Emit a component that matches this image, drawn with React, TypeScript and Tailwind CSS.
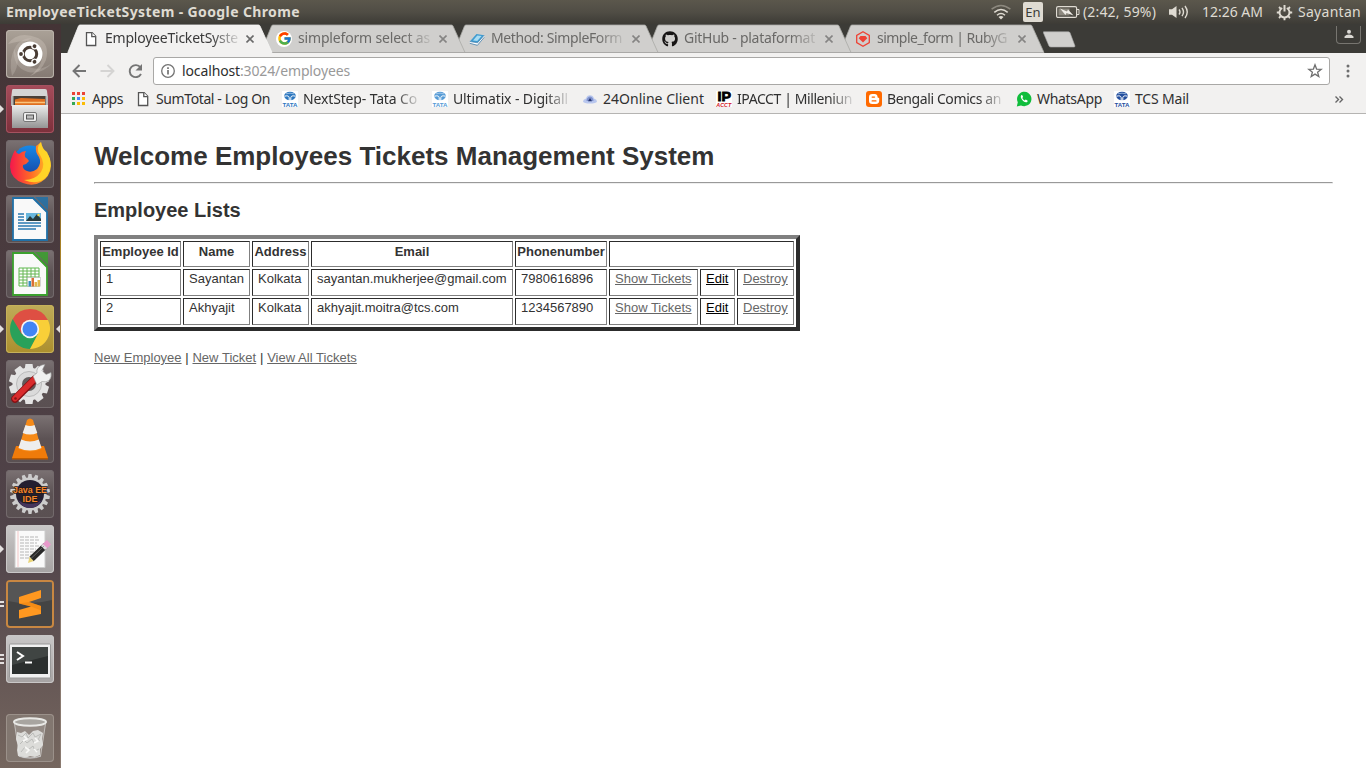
import { useLayoutEffect, useRef, type ReactNode } from "react";
import { FaGithub } from "react-icons/fa";
import { FcGoogle } from "react-icons/fc";

/* Spreads a single line of text over a given width. */
function Fit({ w, children, className = "" }: { w: number; children: string; className?: string }) {
  const ref = useRef<HTMLSpanElement>(null);
  useLayoutEffect(() => {
    const el = ref.current;
    if (!el) return;
    el.style.letterSpacing = "0px";
    const natural = el.getBoundingClientRect().width;
    el.style.letterSpacing = `${(w - natural) / children.length}px`;
  }, [w, children]);
  return (
    <span ref={ref} className={`inline-block shrink-0 whitespace-pre ${className}`}>
      {children}
    </span>
  );
}

const fade = "[mask-image:linear-gradient(to_right,black_80%,rgb(0_0_0/0.15)_100%)]";

/* ---------- small icons ---------- */

function PageIcon() {
  return (
    <svg width="16" height="16" viewBox="0 0 16 16" fill="#fff" stroke="#555" strokeWidth="1.3">
      <path d="M3.5 1.6h5.6l3.6 3.7v9.2H3.5z" />
      <path d="M8.8 1.6v4h3.9" />
    </svg>
  );
}

function BookIcon() {
  return (
    <svg width="16" height="16" viewBox="0 0 16 16">
      <path d="M.8 10.500 7.500 3l7.700 1.200-6.600 7.600z" fill="#3f9bd0" />
      <path d="m4 9.500 4.300-5 4.300.6L8.300 10z" fill="#a9dcf2" />
      <path d="M.8 10.500v1.600l7.600 2 6.800-8V4.200l-6.600 7.600z" fill="#fff" />
      <path d="M.8 10.500 8.600 11.800l6.600-7.600M.8 12.300l7.600 2 6.800-8" fill="none" stroke="#3779a9" strokeWidth=".7" />
    </svg>
  );
}

function GemIcon() {
  return (
    <svg width="16" height="16" viewBox="0 0 16 16">
      <path d="m8 .8 6.300 3.600v7.200L8 15.200l-6.300-3.600V4.400z" fill="none" stroke="#ee4235" strokeWidth="1.300" />
      <path d="M5.500 4.900h5L12.300 7.200 8 11.600 3.700 7.200z" fill="#ee4235" />
    </svg>
  );
}

function AppsIcon() {
  const colors = ["#ea4335", "#ea4335", "#ea4335", "#34a853", "#4285f4", "#fbbc05", "#34a853", "#fbbc05", "#fbbc05"];
  return (
    <svg width="16" height="16" viewBox="0 0 16 16">
      {colors.map((c, i) => (
        <rect key={i} x={1 + (i % 3) * 5} y={1 + Math.floor(i / 3) * 5} width="3" height="3" fill={c} />
      ))}
    </svg>
  );
}

function TataIcon({ color = "#2c77bf" }: { color?: string }) {
  return (
    <svg width="16" height="16" viewBox="0 0 16 16">
      <rect width="16" height="16" fill="#fff" />
      <ellipse cx="8" cy="5" rx="5.800" ry="4.200" fill={color} />
      <path d="M2.500 5.200q4.400-1.200 4.700 1.500V10M13.500 5.200q-4.400-1.200-4.700 1.500V10" fill="none" stroke="#fff" strokeWidth="1" />
      <path d="M4 2.800q4-1.300 8 0" fill="none" stroke="#bcd6ef" strokeWidth=".7" />
      <text x=".5" y="15.500" fontSize="6.200" fontWeight="700" fontFamily="Liberation Sans, sans-serif" textLength="15" lengthAdjust="spacingAndGlyphs" fill={color}>
        TATA
      </text>
    </svg>
  );
}

function DomeIcon() {
  return (
    <svg width="16" height="16" viewBox="0 0 16 16">
      <path d="M1 10.500q0-2 3-3 1-3.200 4-3.200t4 3.200q3 1 3 3-1 2-7 2t-7-2" fill="#b9c7ee" />
      <path d="M4.500 10q0-4 3.500-4.500 3.500.5 3.500 4.500z" fill="#8093cf" />
      <path d="m8 7 2 3.200H6z" fill="#25366f" />
    </svg>
  );
}

function IpIcon() {
  return (
    <svg width="16" height="16" viewBox="0 0 16 16" fontFamily="Liberation Sans, sans-serif" fontWeight="700">
      <rect width="16" height="16" fill="#fff" />
      <text x="1.500" y="10" fontSize="13" textLength="13.500" lengthAdjust="spacingAndGlyphs" stroke="#000" strokeWidth=".8">IP</text>
      <text x=".3" y="15.800" fontSize="6" fontStyle="italic" fill="#d3121b" textLength="15" lengthAdjust="spacingAndGlyphs">ACCT</text>
    </svg>
  );
}

function BloggerIcon() {
  return (
    <svg width="16" height="16" viewBox="0 0 16 16">
      <rect width="16" height="16" rx="3" fill="#ff6a00" />
      <path d="M6.300 3h2.400a2.800 2.800 0 0 1 2.800 2.600c0 .9.300 1.200 1 1.200.500 0 .700.300.700.800v2A3.300 3.300 0 0 1 9.900 13H6.300A3.300 3.300 0 0 1 3 9.700V6.300A3.300 3.300 0 0 1 6.300 3" fill="#fff" />
      <path d="M6.200 6.100h2.300M6.200 9.900h3.700" stroke="#ff6a00" strokeWidth="1.400" strokeLinecap="round" />
    </svg>
  );
}

function WhatsAppIcon() {
  return (
    <svg width="16" height="16" viewBox="0 0 16 16">
      <path d="m.8 15.500 1-4.300A7.200 7.200 0 1 1 5 14.400z" fill="#10bd3c" />
      <path d="M5.200 4.300Q6.500 3.500 7.100 6l-.8 1.100q.8 1.700 2.400 2.300l1-1q2.600 1 1.900 2-1.300 2-4.500-.4Q3.700 6.600 5.200 4.300" fill="#fff" />
    </svg>
  );
}

/* ---------- system bar ---------- */

function SystemBar() {
  return (
    <header className="flex h-6 shrink-0 items-center bg-linear-to-b from-[#5b574c] via-[#504d45] to-[#3d3b36] pl-1.5 text-[14px] leading-6 text-[#dfdbd2]">
      <Fit w={294} className="font-bold">EmployeeTicketSystem - Google Chrome</Fit>
      <div className="ml-auto flex items-center">
        <svg width="20" height="16" viewBox="0 0 20 16" fill="none" stroke="#dfdbd2" strokeWidth="1.500">
          <path d="M.6 5.200q9.400-7.400 18.800 0" stroke="#8c887e" />
          <path d="M3.300 8.300q6.700-5.600 13.400 0M6 11.200q4-3.400 8 0" />
          <path d="m7.500 13 2.500 2.500 2.500-2.500q-2.500-2-5 0" fill="#dfdbd2" stroke="none" />
        </svg>
        <span className="ml-3 h-5 w-5 rounded-xs bg-[#dfdbd2] text-center text-[13px] leading-[21px] text-[#3c3b37]">En</span>
        <svg className="ml-3" width="26" height="16" viewBox="0 0 26 16">
          <rect x="1.600" y="2.600" width="20" height="10.800" rx="1.500" fill="none" stroke="#dfdbd2" strokeWidth="1.200" />
          <rect x="3.500" y="4.500" width="11" height="7" fill="#8d897f" />
          <path d="M22 5.500h2v5h-2" fill="none" stroke="#dfdbd2" />
          <path d="m5 4.500 7 3 1-2 5.500 6-7-2.500-1 2z" fill="#efece6" />
        </svg>
        <Fit w={73} className="ml-0.5">(2:42, 59%)</Fit>
        <svg className="ml-[13px]" width="21" height="16" viewBox="0 0 21 16" fill="none" stroke="#dfdbd2" strokeWidth="1.400">
          <path d="M0 5.300h3L7.500 2v12L3 10.700H0z" fill="#dfdbd2" stroke="none" />
          <path d="M10 5.500q2 2.500 0 5M13 3.800q3 4.200 0 8.400M16 2q4.500 6 0 12" />
        </svg>
        <Fit w={61} className="ml-3">12:26 AM</Fit>
        <svg className="ml-[13px]" width="17" height="17" viewBox="0 0 17 17" fill="none" stroke="#dfdbd2">
          <path d="M10.800 4a5 5 0 1 1-4.600 0" strokeWidth="1.900" />
          <path d="M8.500 1v6.500" strokeWidth="2" />
          <path d="M.8 8.500h2.500M13.700 8.500h2.500M8.500 13.700v2.500M3 3l1.800 1.800M14 3l-1.800 1.800M3 14l1.800-1.800M14 14l-1.800-1.800" strokeWidth="1.900" />
        </svg>
        <Fit w={63} className="mr-[5px] ml-[5px]">Sayantan</Fit>
      </div>
    </header>
  );
}

/* ---------- launcher ---------- */

function Gear({ teeth, fill, r = 17, w = 4 }: { teeth: number; fill: string; r?: number; w?: number }) {
  return (
    <g fill={fill}>
      {Array.from({ length: teeth }, (_, i) => (
        <path key={i} d={`M${24 - w} ${24 - r - 3.500}h${w * 2}l1 6h-${w * 2 + 2}z`} transform={`rotate(${(i * 360) / teeth} 24 24)`} />
      ))}
      <circle cx="24" cy="24" r={r} />
    </g>
  );
}

function Dash() {
  return (
    <g>
      <path d="M2 14Q12 0 32 8 44 14 40 30 35 42 24 46 39 34 36 20 31 6 2 14" fill="#ddd3cb" opacity=".3" />
      <path d="M6 46Q2 29 10 16q6-8 16-8Q12 15 12 27t-6 19" fill="#ddd3cb" opacity=".25" />
      <path d="M8 18Q6 37 22 42q14 3 24-9-10 8-20 5Q12 34 8 18" fill="#ddd3cb" opacity=".25" />
      <circle cx="24" cy="24" r="12.500" fill="#fff" />
      <circle cx="24" cy="24" r="6.700" fill="none" stroke="#493c34" strokeWidth="3" />
      {[60, 180, 300].map((a) => (
        <g key={a} transform={`rotate(${a} 24 24)`}>
          <circle cx="32.800" cy="24" r="3" fill="#fff" />
          <circle cx="33" cy="24" r="1.900" fill="#493c34" />
        </g>
      ))}
    </g>
  );
}

function Files() {
  return (
    <g>
      <path d="M7 4h32q2 0 2 2l1 8H5l1-8q0-2 1-2" fill="#d5d5d5" />
      <path d="M5 11h37v10H5z" fill="#b5b5b5" />
      <path d="M7.500 11h32v10h-32z" fill="#4a4039" />
      <path d="M9 14.500 15 13l24 1v6H9z" fill="#e06f20" />
      <path d="M9 17.500h30" stroke="#fac47d" strokeWidth="1.500" />
      <path d="M6 20h36v23H6z" fill="url(#silver)" />
      <rect x="17.500" y="27.500" width="13" height="9" rx="1.500" fill="#eee" stroke="#777" />
      <rect x="20.500" y="30" width="7" height="4" fill="#bbb" stroke="#555" />
    </g>
  );
}

function Firefox() {
  return (
    <g>
      <circle cx="24" cy="23" r="17.500" fill="url(#fxblue)" />
      <path d="M30 6q4-3 5-4 1 7 5 10 5 6 5 14-1 11-10 16-8 5-18 1Q5 39 4 27q0-8 5-17 1 3 4 4 3-3 7-3-2 3-1 6 3 2 4 4-2 3-6 4-1 4 4 6 5 2 10-2 5-6 2-12-4-5-3-11" fill="url(#fxorange)" />
      <path d="M35 2q-6 6-1 13 6 9 1 17-6 8-17 8 15 6 23-4 7-12 0-24Q36 9 35 2" fill="#ffd928" opacity=".9" />
    </g>
  );
}

function Sheet({ color, children }: { color: string; children: ReactNode }) {
  return (
    <g>
      <path d="M7 3h20l14 14v28H7z" fill="#f9f9f9" stroke={color} strokeWidth="1.800" />
      <path d="M29 2h13v13z" fill={color} opacity=".85" />
      <path d="m27 2.500 14.500 14.500" stroke={color} strokeWidth="1.500" />
      {children}
    </g>
  );
}

function Writer() {
  return (
    <Sheet color="#2171a8">
      <path d="M12 19h6M12 22h6M12 25h6M12 28h23M12 31h23M12 34h18" stroke="#2a7ab1" strokeWidth="1.500" />
      <rect x="20" y="18" width="15" height="8" fill="#68b6dc" />
      <path d="m20 26 4-5 3 3 4-5 4 5v2z" fill="#273b3d" />
      <circle cx="32.500" cy="20" r="1.200" fill="#ffdd4c" />
    </Sheet>
  );
}

function Calc() {
  return (
    <Sheet color="#3ba02e">
      <path d="M13 18h20v18H13z" fill="#fff" stroke="#5db94c" />
      <path d="M13 21h20M13 24h20M13 27h20M13 30h20M13 33h20M17 18v18M21 18v18M25 18v18M29 18v18" stroke="#65b653" />
      <rect x="21.500" y="27.500" width="13" height="9" fill="#fff" stroke="#aaa" strokeWidth=".5" />
      <path d="M22.500 31h2.500v5.500h-2.500z" fill="#398fbd" />
      <path d="M25.500 28h2.500v8.500h-2.500z" fill="#d96e36" />
      <path d="M28.500 32H31v4.500h-2.500zM31.500 30H34v6.500h-2.500z" fill="#e2b64b" />
    </Sheet>
  );
}

function Chrome() {
  return (
    <g>
      <path d="M24 24 6.700 14A20 20 0 0 0 24 44l8-15z" fill="#29a15a" />
      <path d="M24 24v-9h17.900A20 20 0 0 1 24 44l8-15z" fill="#f9cf38" />
      <path d="M24 15h17.900A20 20 0 0 0 6.700 14l9 15z" fill="#de4f43" />
      <circle cx="24" cy="24" r="9.200" fill="#f5f5f5" />
      <circle cx="24" cy="24" r="7.500" fill="#4285f4" />
    </g>
  );
}

function Tools() {
  return (
    <g>
      <g transform="translate(-1 0)">
        <Gear teeth={10} fill="#e4e4e4" r={16.500} w={3.500} />
        <circle cx="24" cy="24" r="12.500" fill="#dadada" stroke="#bbb" />
        <circle cx="24" cy="24" r="7" fill="#625b5b" />
      </g>
      <path d="m9 39 20-20" stroke="#851014" strokeWidth="7.500" strokeLinecap="round" />
      <path d="m9 38.500 20-20" stroke="#d92b2c" strokeWidth="5.500" strokeLinecap="round" />
      <path d="m27 16 4-3q-1-6 5-8l3-.500-3 6 4 4 5-2q1 5-2 8-3 2-7 1l-5 3.500z" fill="#f0f0f0" stroke="#999" strokeWidth=".6" />
      <circle cx="9.500" cy="38.500" r="1.300" fill="#831416" />
    </g>
  );
}

function Cone() {
  return (
    <g>
      <path d="m6 43 4-12h28l4 12z" fill="#ef7b0a" />
      <path d="M6 43h36v1.500H6z" fill="#b95900" />
      <path d="M21 5q3-3 6 0l8.500 29q-11 5-23 0z" fill="#f68a17" />
      <path d="m19.500 10-2.800 8q7.300 3 14.600 0l-2.800-8q-4.500 2-9 0M15.200 24.500 12.500 33q11.500 5 23 0l-2.700-8.500q-8.800 4-17.600 0" fill="#eee" />
    </g>
  );
}

function JavaEE() {
  return (
    <g>
      <Gear teeth={18} fill="#ccc" r={16.500} w={1.500} />
      <circle cx="24" cy="24" r="14" fill="#241f30" />
      <path d="M12 30q12 8 24 0-4 8-12 8t-12-8" fill="#44345b" />
      <g fontFamily="Liberation Sans, sans-serif" fontSize="9" fontWeight="700" fill="#f4852a" stroke="#231a18" strokeWidth="1.400" paintOrder="stroke">
        <text x="7" y="22.500" textLength="34" lengthAdjust="spacingAndGlyphs">Java EE</text>
        <text x="16.500" y="31.500" textLength="15" lengthAdjust="spacingAndGlyphs">IDE</text>
      </g>
    </g>
  );
}

function Gedit() {
  return (
    <g>
      <path d="M9 5.500h30v37H9z" fill="#fafafa" stroke="#ccc" />
      <path d="M12 6v36" stroke="#efafaf" strokeWidth=".7" />
      <path d="M14 12h18M14 15h20M14 18h17M14 21h20M14 24h16M14 27h14M14 30h12M14 33h9" stroke="#b5b5b5" strokeWidth="1.200" strokeDasharray="4 1" />
      <path d="m25.500 34 14-13.500" stroke="#292929" strokeWidth="6" />
      <path d="m38 22 5-4.700" stroke="#e79acb" strokeWidth="6" />
      <path d="m37 23 2-2" stroke="#ddd" strokeWidth="6" />
      <path d="m23.500 31.800 4.200 4.300-5.700 1.900z" fill="#e9d477" />
      <path d="m25 33.500 12.500-12" stroke="#666" strokeWidth="1" />
    </g>
  );
}

function Sublime() {
  return (
    <g>
      <path d="M2 2h44v18Q24 26 2 21z" fill="#656565" opacity=".55" />
      <path d="m13 17 22-7v8l-12 4 12 4v8l-22 4.500V30l12-3.500-12-3z" fill="#ff9820" />
      <path d="m13 23.500 12 3 10 4V26l-12-4z" fill="#e77e0b" opacity=".45" />
    </g>
  );
}

function Terminal() {
  return (
    <g>
      <rect x="3.500" y="9" width="41" height="34" rx="1" fill="#f1f1f1" stroke="#999" />
      <rect x="6" y="12" width="36" height="27" fill="#2b2f2e" />
      <path d="M6 12h36v9L6 30z" fill="#4a4e4d" opacity=".7" />
      <path d="m11 17 6 4-6 4M19 27.500h7" fill="none" stroke="#fff" strokeWidth="2" />
    </g>
  );
}

function Trash() {
  return (
    <g>
      <path d="m8 8 5 35q11 4 22 0l5-35z" fill="#ddd" opacity=".2" />
      <path d="m11 18 4 1 4-2 4 4 4-4 5-1 5 3-1 6 1 6-3 4v6l-5 2-5-1-5 2-7-2-1-6 1-5-2-6z" fill="#dcdcd9" />
      <path d="m12 21 4 2 4-4 2 5 5-5 2 4 6-3-3 6M14 30l4-4 3 3 5-4 2 4 6-3M15 38l4-5 3 3 5-4 2 5 4-2" fill="none" stroke="#b3b4b1" strokeWidth=".8" />
      <path d="m18 22 3 3-4 2M29 24l3 3-4 2M19 33l4 3-3 3M28 35l3 3" fill="none" stroke="#f8f8f6" strokeWidth="1.600" />
      <ellipse cx="24" cy="8" rx="16" ry="3.800" fill="#a8a5a0" stroke="#e9e9e6" strokeWidth="2" />
      <path d="m8.500 10 5 32M39.500 10l-5 32" stroke="#e6e6e3" strokeWidth=".8" opacity=".7" />
      <path d="M13 42q11 4 22 0" fill="none" stroke="#ccc" />
    </g>
  );
}

const glass = "bg-linear-to-b from-[#7b7273] via-[#5c5254] to-[#5a5052] shadow-[inset_0_0_0_1px_#736a6c]";
const silverTile = "bg-linear-to-b from-[#c9c7c7] to-[#a6a3a3] shadow-[inset_0_0_0_1px_#c9c7c7]";

const launcher: { art: ReactNode; tile: string; left?: number; right?: boolean }[] = [
  { art: <Dash />, tile: "bg-linear-to-b from-[#aaa197] to-[#857a73] shadow-[inset_0_0_0_1px_#b9b1a9]" },
  { art: <Files />, tile: "bg-linear-to-b from-[#a64c5b] to-[#7c303b] shadow-[inset_0_0_0_1px_#a55260]", left: 1 },
  { art: <Firefox />, tile: glass },
  { art: <Writer />, tile: glass },
  { art: <Calc />, tile: glass },
  { art: <Chrome />, tile: "bg-linear-to-b from-[#bfab58] to-[#ac8f2d] shadow-[inset_0_0_0_1px_#c6b15a]", left: 1, right: true },
  { art: <Tools />, tile: glass },
  { art: <Cone />, tile: glass },
  { art: <JavaEE />, tile: glass },
  { art: <Gedit />, tile: silverTile, left: 1 },
  { art: <Sublime />, tile: "bg-[#444] shadow-[inset_0_0_0_2px_#c88742]", left: 2 },
  { art: <Terminal />, tile: silverTile, left: 3 },
];

function Tile({ art, tile, left = 0, right = false }: { art: ReactNode; tile: string; left?: number; right?: boolean }) {
  return (
    <div className="flex h-12 w-full shrink-0 items-center">
      <svg width="6" height="12" viewBox="0 0 6 12" fill="#e4e0df">
        {left === 1 && <path d="M0 2v8l4-4z" />}
        {left === 2 && <path d="M0 3h4v2H0zM0 7h4v2H0z" />}
        {left === 3 && <path d="M0 1h4v2H0zM0 5h4v2H0zM0 9h4v2H0z" />}
      </svg>
      <div className={`h-12 w-12 rounded-[4px] ${tile}`}>
        <svg width="48" height="48" viewBox="0 0 48 48">{art}</svg>
      </div>
      <svg width="6" height="12" viewBox="0 0 6 12" fill="#e4e0df">{right && <path d="M6 2v8L2 6z" />}</svg>
    </div>
  );
}

function Launcher() {
  return (
    <nav className="flex w-[61px] shrink-0 bg-linear-to-b from-[#443436] via-[#51444a] via-70% to-[#75665e]">
      <svg className="absolute" width="0" height="0">
        <defs>
          <linearGradient id="silver" x2="0" y2="1"><stop stopColor="#ededed" /><stop offset="1" stopColor="#949494" /></linearGradient>
          <linearGradient id="fxblue" x2="0" y2="1"><stop stopColor="#1689e8" /><stop offset="1" stopColor="#173c9b" /></linearGradient>
          <linearGradient id="fxorange" x2="1" y2="0"><stop stopColor="#f5174c" /><stop offset=".5" stopColor="#ff6926" /><stop offset="1" stopColor="#ffcb24" /></linearGradient>
        </defs>
      </svg>
      <div className="flex w-[60px] flex-col gap-[7px] pt-1.5 pb-1.5">
        {launcher.map((t, i) => <Tile key={i} {...t} />)}
        <div className="mt-auto">
          <Tile art={<Trash />} tile="bg-[#827770] shadow-[inset_0_0_0_1px_#9b918a]" />
        </div>
      </div>
      <div className="w-px bg-linear-to-b from-[#443436] from-10% via-[#a98225] via-30% to-[#8a7a70] to-60%" />
    </nav>
  );
}

/* ---------- browser chrome ---------- */

const tabs = [
  { icon: <PageIcon />, text: "EmployeeTicketSyste", w: 133 },
  { icon: <span className="flex h-4 w-4 items-center justify-center rounded-full bg-white"><FcGoogle size={15} /></span>, text: "simpleform select as", w: 132 },
  { icon: <BookIcon />, text: "Method: SimpleForm", w: 131 },
  { icon: <FaGithub size={16} color="#171515" />, text: "GitHub - plataformat", w: 131 },
  { icon: <GemIcon />, text: "simple_form | RubyG", w: 130 },
];

const layers = ["z-50", "z-40", "z-30", "z-20", "z-10"];

function TabStrip() {
  return (
    <div className="flex h-[29px] bg-[#3c3b37] pl-1.5">
      {tabs.map((t, i) => (
        <div key={t.text} className={`relative flex w-[193px] shrink-0 items-center pl-4 text-[14px] ${layers[i]} ${i === 0 ? "text-[#3a3a3a]" : "text-[#6a6967]"}`}>
          <svg className="absolute top-0 left-0" width="207" height="29" viewBox="0 0 207 29">
            <path d="M0 29 1 28 11.500 2Q12 1 13 1H191.500Q192.500 1 193 2L205 28.500V29z" fill={i === 0 ? "#f2f1f0" : "#d0cfcd"} />
            <path d="M1 28 11.500 2Q12 1 13 1H191.500Q192.500 1 193 2L205 28.500" fill="none" stroke={i === 0 ? "#f8f7f6" : "#aaa9a6"} strokeWidth=".8" />
            {i > 0 && <path d="M5 28.500h200" stroke="#aaa9a7" />}
          </svg>
          <div className="relative flex items-center">
            {t.icon}
            <div className={`mb-0.5 ml-1.5 w-[133px] leading-[27px] ${fade}`}><Fit w={t.w}>{t.text}</Fit></div>
            <svg className="ml-2" width="8" height="8" viewBox="0 0 8 8" stroke={i === 0 ? "#6a6a6a" : "#858483"} strokeWidth="1.600"><path d="m.5.5 7 7M7.500.5l-7 7" /></svg>
          </div>
        </div>
      ))}
      <svg className="mt-[7px] ml-[10px]" width="34" height="18" viewBox="0 0 34 18"><path d="M1.500.8h25q1 0 1.500 1l5 13.200q0 1-1 1H9q-1.500 0-2-1L1.500 2z" fill="#d0cfcd" stroke="#aaa" strokeWidth=".6" /></svg>
      <div className="mt-0.5 mr-[5px] ml-auto flex h-[18px] w-[25px] items-center justify-center rounded-b border border-t-0 border-[#777570]">
        <svg className="mb-0.5" width="10" height="10" viewBox="0 0 10 10" fill="#dad8d3"><circle cx="5" cy="2.800" r="2" /><path d="M.5 9V7.500Q2 5.500 5 5.500t4.500 2V9z" /></svg>
      </div>
    </div>
  );
}

function Toolbar() {
  return (
    <div className="flex h-9 items-center bg-[#f2f1f0] pl-[11px]">
      <svg width="74" height="16" viewBox="0 0 74 16" fill="none" strokeWidth="1.900">
        <path d="M14 8H1.500M7.500 2 1.500 8l6 6" stroke="#757575" />
        <path d="M28.500 8H41M35.500 2l6 6-6 6" stroke="#d5d4d3" />
        <path d="M69 11a6 6 0 1 1-.5-6.500" stroke="#757575" />
        <path d="M70 1v6.500h-6.500z" fill="#757575" />
      </svg>
      <div className="ml-[7px] flex h-7 w-[1177px] items-center rounded-[3px] border border-[#a9a8a6] bg-white pl-1.5 text-[14px] leading-[26px]">
        <svg width="16" height="16" viewBox="0 0 16 16" fill="none" stroke="#737373"><circle cx="8" cy="8" r="6.300" strokeWidth="1.300" /><path d="M8 7v4.500M8 4.200v1.700" strokeWidth="1.700" /></svg>
        <span className="ml-1.5 text-[#2e2e2e]"><Fit w={58}>localhost</Fit></span>
        <span className="text-[#999]"><Fit w={110}>:3024/employees</Fit></span>
        <svg className="mr-1.5 ml-auto" width="16" height="16" viewBox="0 0 16 16" fill="none" stroke="#6f6f6f" strokeWidth="1.300"><path d="m8 1.800 1.600 4.300 4.600.2-3.600 2.900 1.200 4.400L8 11.100l-3.800 2.500 1.200-4.400-3.600-2.900 4.600-.2z" /></svg>
      </div>
      <svg className="ml-[15px]" width="6" height="16" viewBox="0 0 6 16" fill="#6e6e6e"><circle cx="3" cy="3" r="1.500" /><circle cx="3" cy="8" r="1.500" /><circle cx="3" cy="13" r="1.500" /></svg>
    </div>
  );
}

const bookmarks = [
  { icon: <AppsIcon />, text: "Apps", w: 31, box: "w-16" },
  { icon: <PageIcon />, text: "SumTotal - Log On", w: 114, box: "w-[147px]" },
  { icon: <TataIcon />, text: "NextStep- Tata Co", w: 114, box: "w-[150px]", fade: true },
  { icon: <TataIcon color="#559bd6" />, text: "Ultimatix - Digitall", w: 115, box: "w-[150px]", fade: true },
  { icon: <DomeIcon />, text: "24Online Client", w: 101, box: "w-[134px]" },
  { icon: <IpIcon />, text: "IPACCT | Milleniun", w: 115, box: "w-[150px]", fade: true },
  { icon: <BloggerIcon />, text: "Bengali Comics an", w: 114, box: "w-[150px]", fade: true },
  { icon: <WhatsAppIcon />, text: "WhatsApp", w: 65, box: "w-[98px]" },
  { icon: <TataIcon color="#244f9e" />, text: "TCS Mail", w: 54, box: "w-[90px]" },
];

function BookmarkBar() {
  return (
    <div className="flex h-[25px] items-center border-b border-[#b5b4b2] bg-[#f2f1f0] pb-1 pl-[10px] text-[14px] text-[#303030]">
      {bookmarks.map((b) => (
        <div key={b.text} className={`flex shrink-0 items-center ${b.box}`}>
          <span className="mr-[5px] w-4 shrink-0">{b.icon}</span>
          <div className={b.fade ? `mb-0.5 w-[115px] ${fade}` : "mb-0.5"}><Fit w={b.w}>{b.text}</Fit></div>
        </div>
      ))}
      <svg className="mr-[22px] ml-auto" width="10" height="9" viewBox="0 0 10 9" fill="none" stroke="#666" strokeWidth="1.400"><path d="m1.500 1.500 3 3-3 3M5.500 1.500l3 3-3 3" /></svg>
    </div>
  );
}

/* ---------- page ---------- */

const employees = [
  { id: 1, name: "Sayantan", address: "Kolkata", email: "sayantan.mukherjee@gmail.com", phone: "7980616896" },
  { id: 2, name: "Akhyajit", address: "Kolkata", email: "akhyajit.moitra@tcs.com", phone: "1234567890" },
];

const cell = "border border-t-[#2c2c2c] border-l-[#2c2c2c] border-r-[#808080] border-b-[#808080]";
const head = `${cell} h-[26px] p-px pb-[5px] align-middle font-bold whitespace-nowrap`;
const data = `${cell} h-[27px] px-[5px] align-top whitespace-nowrap`;

function Link({ children, dark = false }: { children: string; dark?: boolean }) {
  return <a href="#" className={`underline ${dark ? "text-black" : "text-[#666]"}`}>{children}</a>;
}

function EmployeePage() {
  return (
    <main className="flex-1 bg-white px-[33px] font-['Liberation_Sans',Arial,sans-serif] text-[13px] leading-[18px] text-[#333]">
      <h1 className="mt-6 text-[26px] leading-9 font-bold">Welcome Employees Tickets Management System</h1>
      <hr className="mt-2 h-0.5 border border-t-[#999] border-r-[#eee] border-b-[#eee] border-l-[#999]" />
      <h2 className="mt-3 text-[20px] leading-7 font-bold">Employee Lists</h2>
      <table className="mt-[11px] w-[706px] table-fixed border-separate border-spacing-[2px] border-4 border-t-[#808080] border-r-[#2c2c2c] border-b-[#2c2c2c] border-l-[#808080]">
        <colgroup>
          <col className="w-[81px]" /><col className="w-[67px]" /><col className="w-[57px]" /><col className="w-[202px]" />
          <col className="w-[92px]" /><col className="w-[89px]" /><col className="w-[35px]" /><col className="w-[57px]" />
        </colgroup>
        <thead>
          <tr>
            {["Employee Id", "Name", "Address", "Email", "Phonenumber"].map((h) => <th key={h} className={head}>{h}</th>)}
            <th className={head} colSpan={3} />
          </tr>
        </thead>
        <tbody>
          {employees.map((e) => (
            <tr key={e.id}>
              <td className={data}>{e.id}</td>
              <td className={data}>{e.name}</td>
              <td className={data}>{e.address}</td>
              <td className={data}>{e.email}</td>
              <td className={data}>{e.phone}</td>
              <td className={data}><Link>Show Tickets</Link></td>
              <td className={data}><Link dark>Edit</Link></td>
              <td className={data}><Link>Destroy</Link></td>
            </tr>
          ))}
        </tbody>
      </table>
      <p className="mt-[18px] [word-spacing:0.15px]"><Link>New Employee</Link> | <Link>New Ticket</Link> | <Link>View All Tickets</Link></p>
    </main>
  );
}

export default function App() {
  return (
    <div className="flex h-screen w-full flex-col overflow-hidden font-['Noto_Sans',sans-serif]">
      <SystemBar />
      <div className="flex min-h-0 flex-1">
        <Launcher />
        <div className="flex min-w-0 flex-1 flex-col">
          <TabStrip />
          <Toolbar />
          <BookmarkBar />
          <EmployeePage />
        </div>
      </div>
    </div>
  );
}
